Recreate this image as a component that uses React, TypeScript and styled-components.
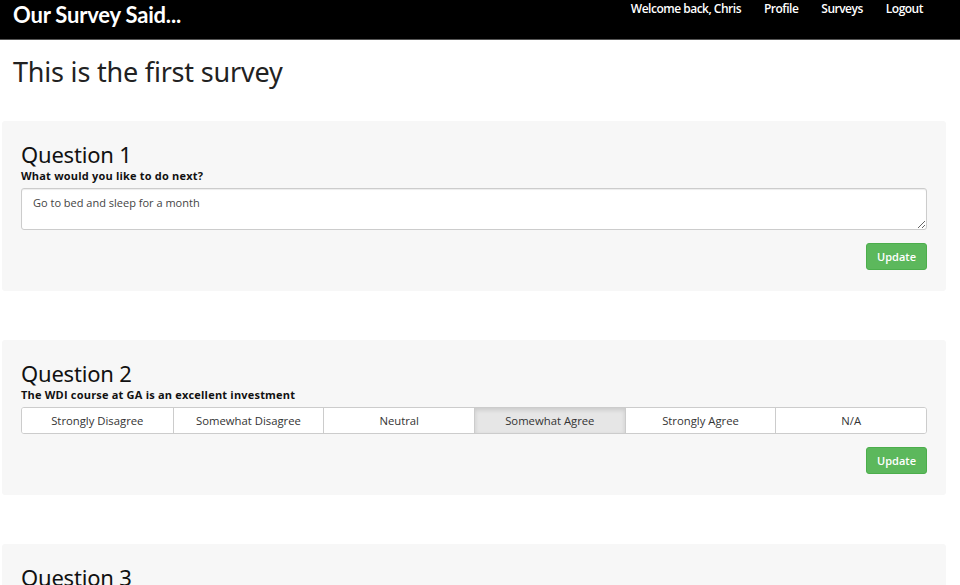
import React, { useState } from "react";
import styled, { createGlobalStyle } from "styled-components";

const Global = createGlobalStyle`
  html, body { margin: 0; padding: 0; background: #fff; }
  body { font-family: "Open Sans", "Liberation Sans", sans-serif; color: #333; font-size: 11px; }
  * { box-sizing: border-box; }
`;

const NavBar = styled.nav`
  height: 40px;
  background: #000;
  border-bottom: 1px solid #555;
  display: flex;
  align-items: flex-start;
  justify-content: space-between;
  padding: 0 37px 0 13px;
`;

const Brand = styled.div`
  font-family: "Lato", "Noto Sans", sans-serif;
  font-weight: 700;
  font-size: 22px;
  color: #fff;
  line-height: 30px;
  letter-spacing: -0.2px;
`;

const NavLinks = styled.div`
  display: flex;
  gap: 23px;
  padding-top: 1px;
`;

const NavLink = styled.a`
  color: #fff;
  font-weight: 600;
  font-size: 12px;
  line-height: 16px;
  text-decoration: none;
  letter-spacing: -0.5px;
`;

const Main = styled.main`
  padding: 0 14px 0 2px;
`;

const Title = styled.h1`
  font-family: "Noto Sans", sans-serif;
  font-weight: 400;
  font-size: 27px;
  color: #222;
  margin: 14px 0 31px 11px;
  line-height: 36px;
  letter-spacing: -0.2px;
`;

const Panel = styled.section`
  background: #f7f7f7;
  border-radius: 3px;
  padding: 19px 19px 21px 19px;
  margin-bottom: 49px;
`;

const QHeading = styled.h2`
  font-family: "Noto Sans", sans-serif;
  font-weight: 400;
  font-size: 22px;
  line-height: 28px;
  color: #111;
  margin: 0;
  letter-spacing: -0.2px;
`;

const QLabel = styled.label`
  display: block;
  font-weight: 700;
  font-size: 11px;
  line-height: 14px;
  color: #111;
  margin: 1px 0 5px;
  letter-spacing: 0.2px;
`;

const TextArea = styled.textarea`
  display: block;
  width: 100%;
  height: 42px;
  border: 1px solid #ccc;
  border-radius: 3px;
  padding: 6px 11px;
  font-family: "Open Sans", sans-serif;
  font-size: 11px;
  color: #444;
  background: #fff;
  resize: vertical;
  box-shadow: inset 0 1px 1px rgba(0,0,0,0.075);
`;

const Actions = styled.div`
  display: flex;
  justify-content: flex-end;
  margin-top: 13px;
`;

const UpdateButton = styled.button`
  background: #5cb85c;
  border: 1px solid #4cae4c;
  border-radius: 3px;
  color: #fff;
  font-family: "Open Sans", sans-serif;
  font-weight: 600;
  font-size: 11px;
  height: 27px;
  padding: 0 10px;
`;

const Group = styled.div`
  display: grid;
  grid-template-columns: repeat(6, 1fr);
  border: 1px solid #ccc;
  border-radius: 3px;
  overflow: hidden;
  background: #fff;
`;

const Choice = styled.button<{ $active?: boolean }>`
  height: 25px;
  border: none;
  border-left: 1px solid #ccc;
  &:first-child { border-left: none; }
  background: ${p => (p.$active ? "#e6e6e6" : "#fff")};
  box-shadow: ${p => (p.$active ? "inset 0 2px 4px rgba(0,0,0,0.125)" : "none")};
  font-family: "Open Sans", sans-serif;
  font-size: 11.3px;
  color: #333;
  padding: 0;
`;

const options = [
  "Strongly Disagree",
  "Somewhat Disagree",
  "Neutral",
  "Somewhat Agree",
  "Strongly Agree",
  "N/A",
];

export default function App() {
  const [sel, setSel] = useState(3);
  return (
    <>
      <Global />
      <NavBar>
        <Brand>Our Survey Said...</Brand>
        <NavLinks>
          <NavLink>Welcome back, Chris</NavLink>
          <NavLink href="#">Profile</NavLink>
          <NavLink href="#">Surveys</NavLink>
          <NavLink href="#">Logout</NavLink>
        </NavLinks>
      </NavBar>
      <Main>
        <Title>This is the first survey</Title>
        <Panel>
          <QHeading>Question 1</QHeading>
          <QLabel>What would you like to do next?</QLabel>
          <TextArea defaultValue="Go to bed and sleep for a month" />
          <Actions>
            <UpdateButton>Update</UpdateButton>
          </Actions>
        </Panel>
        <Panel>
          <QHeading>Question 2</QHeading>
          <QLabel>The WDI course at GA is an excellent investment</QLabel>
          <Group>
            {options.map((o, i) => (
              <Choice key={o} $active={i === sel} onClick={() => setSel(i)}>
                {o}
              </Choice>
            ))}
          </Group>
          <Actions>
            <UpdateButton>Update</UpdateButton>
          </Actions>
        </Panel>
        <Panel>
          <QHeading>Question 3</QHeading>
        </Panel>
      </Main>
    </>
  );
}
